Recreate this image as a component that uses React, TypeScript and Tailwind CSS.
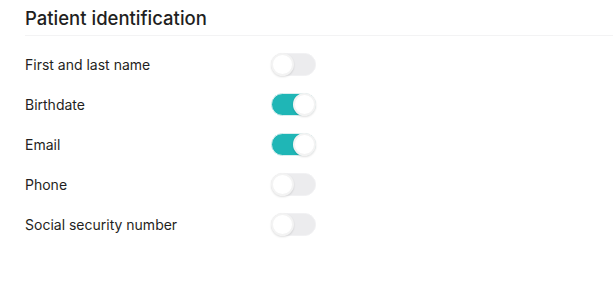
import { useState } from "react";

const fields = [
  { label: "First and last name", on: false },
  { label: "Birthdate", on: true },
  { label: "Email", on: true },
  { label: "Phone", on: false },
  { label: "Social security number", on: false },
];

function Toggle({ on, onClick }: { on: boolean; onClick: () => void }) {
  return (
    <button
      onClick={onClick}
      className={`relative h-[23px] w-[45px] rounded-full border ${
        on ? "bg-[#1fb6b6] border-[#d9eeee]" : "bg-[#ececee] border-[#f1f1f3]"
      }`}
    >
      <span
        className={`absolute top-[-1px] h-[23px] w-[23px] rounded-full bg-white border-2 border-[#f3f3f3] shadow-[0_1px_2px_rgba(0,0,0,0.12)] ${
          on ? "left-[21px]" : "left-[-1px]"
        }`}
      />
    </button>
  );
}

export default function App() {
  const [state, setState] = useState(fields.map((f) => f.on));

  return (
    <div
      className="w-[613px] h-[298px] bg-white text-[#1f1f22]"
      style={{ fontFamily: "Inter, 'Noto Sans', sans-serif" }}
    >
      <div className="ml-[25px] h-[36px] border-b border-[#f3f3f4] flex items-center">
        <h2 className="text-[18.5px] font-medium leading-none pt-[1px]">Patient identification</h2>
      </div>
      <div className="mt-[8px] pl-[25px]">
        {fields.map((f, i) => (
          <div key={f.label} className="h-[40px] flex items-center">
            <span className="w-[246px] text-[14px]">{f.label}</span>
            <Toggle
              on={state[i]}
              onClick={() => setState((s) => s.map((v, j) => (j === i ? !v : v)))}
            />
          </div>
        ))}
      </div>
    </div>
  );
}
